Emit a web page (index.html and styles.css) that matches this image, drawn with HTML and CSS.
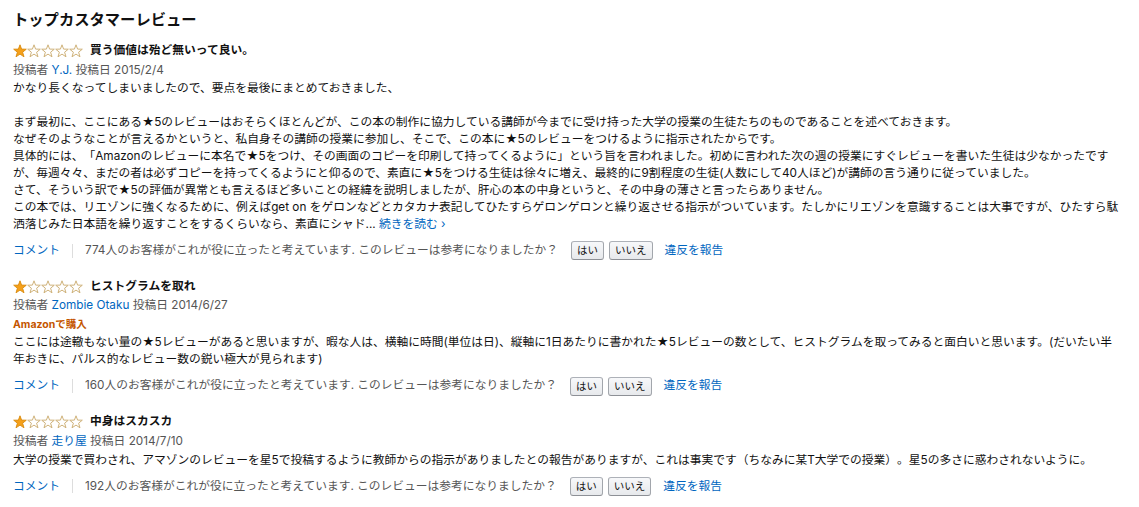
FILE: index.html
```html
<!DOCTYPE html>
<html lang="ja">
<head>
    <meta charset="UTF-8">
    <meta name="viewport" content="width=device-width, initial-scale=1.0">
    <title>トップカスタマーレビュー</title>
    <link rel="stylesheet" href="styles.css">
</head>
<body>
    <svg class="defs" width="0" height="0" aria-hidden="true">
        <defs>
            <polygon id="star" points="7,0.8 8.6,5.1 13.3,5.2 9.6,8.2 11,12.8 7,10.1 3,12.8 4.4,8.2 0.7,5.2 5.4,5.1"/>
        </defs>
    </svg>

    <div class="container">
        <h3>トップカスタマーレビュー</h3>

        <div class="review">
            <div class="review-title">
                <svg class="stars" width="70" height="14" viewBox="0 0 70 14">
                    <use href="#star" class="on"/>
                    <use href="#star" x="14" class="off"/>
                    <use href="#star" x="28" class="off"/>
                    <use href="#star" x="42" class="off"/>
                    <use href="#star" x="56" class="off"/>
                </svg>
                <span>買う価値は殆ど無いって良い。</span>
            </div>
            <div class="byline">投稿者 <a href="#">Y.J.</a> 投稿日 2015/2/4</div>
            <p class="review-text">かなり長くなってしまいましたので、要点を最後にまとめておきました、<br><br>まず最初に、ここにある★5のレビューはおそらくほとんどが、この本の制作に協力している講師が今までに受け持った大学の授業の生徒たちのものであることを述べておきます。<br>なぜそのようなことが言えるかというと、私自身その講師の授業に参加し、そこで、この本に★5のレビューをつけるように指示されたからです。<br>具体的には、「Amazonのレビューに本名で★5をつけ、その画面のコピーを印刷して持ってくるように」という旨を言われました。初めに言われた次の週の授業にすぐレビューを書いた生徒は少なかったですが、毎週々々、まだの者は必ずコピーを持ってくるようにと仰るので、素直に★5をつける生徒は徐々に増え、最終的に9割程度の生徒(人数にして40人ほど)が講師の言う通りに従っていました。<br>さて、そういう訳で★5の評価が異常とも言えるほど多いことの経緯を説明しましたが、肝心の本の中身というと、その中身の薄さと言ったらありません。<br>この本では、リエゾンに強くなるために、例えばget on をゲロンなどとカタカナ表記してひたすらゲロンゲロンと繰り返させる指示がついています。たしかにリエゾンを意識することは大事ですが、ひたすら駄洒落じみた日本語を繰り返すことをするくらいなら、素直にシャド... <a href="#" class="more">続きを読む ›</a></p>
            <div class="review-footer">
                <a href="#">コメント</a>
                <span class="divider"></span>
                <span>774人のお客様がこれが役に立ったと考えています. このレビューは参考になりましたか？</span>
                <button class="vote first">はい</button>
                <button class="vote">いいえ</button>
                <a href="#" class="report">違反を報告</a>
            </div>
        </div>

        <div class="review">
            <div class="review-title">
                <svg class="stars" width="70" height="14" viewBox="0 0 70 14">
                    <use href="#star" class="on"/>
                    <use href="#star" x="14" class="off"/>
                    <use href="#star" x="28" class="off"/>
                    <use href="#star" x="42" class="off"/>
                    <use href="#star" x="56" class="off"/>
                </svg>
                <span>ヒストグラムを取れ</span>
            </div>
            <div class="byline">投稿者 <a href="#">Zombie Otaku</a> 投稿日 2014/6/27</div>
            <div class="badge">Amazonで購入</div>
            <p class="review-text">ここには途轍もない量の★5レビューがあると思いますが、暇な人は、横軸に時間(単位は日)、縦軸に1日あたりに書かれた★5レビューの数として、ヒストグラムを取ってみると面白いと思います。(だいたい半<span class="nowrap">年おき</span>に、パルス的なレビュー数の鋭い極大が見られます)</p>
            <div class="review-footer">
                <a href="#">コメント</a>
                <span class="divider"></span>
                <span>160人のお客様がこれが役に立ったと考えています. このレビューは参考になりましたか？</span>
                <button class="vote first">はい</button>
                <button class="vote">いいえ</button>
                <a href="#" class="report">違反を報告</a>
            </div>
        </div>

        <div class="review">
            <div class="review-title">
                <svg class="stars" width="70" height="14" viewBox="0 0 70 14">
                    <use href="#star" class="on"/>
                    <use href="#star" x="14" class="off"/>
                    <use href="#star" x="28" class="off"/>
                    <use href="#star" x="42" class="off"/>
                    <use href="#star" x="56" class="off"/>
                </svg>
                <span>中身はスカスカ</span>
            </div>
            <div class="byline">投稿者 <a href="#">走り屋</a> 投稿日 2014/7/10</div>
            <p class="review-text spaced">大学の授業で買わされ、アマゾンのレビューを星5で投稿するように教師からの指示がありましたとの報告がありますが、これは事実です（ちなみに某T大学での授業）。星5の多さに惑わされないように。</p>
            <div class="review-footer">
                <a href="#">コメント</a>
                <span class="divider"></span>
                <span>192人のお客様がこれが役に立ったと考えています. このレビューは参考になりましたか？</span>
                <button class="vote first">はい</button>
                <button class="vote">いいえ</button>
                <a href="#" class="report">違反を報告</a>
            </div>
        </div>
    </div>
</body>
</html>
```

FILE: styles.css
```css
body {
    margin: 0;
    background-color: #ffffff;
    color: #111111;
    font-family: Inter, "Noto Sans CJK JP", sans-serif;
    font-size: 11.75px;
    line-height: 17.1px;
    text-spacing-trim: space-all;
}

a {
    color: #0066c0;
    text-decoration: none;
}

.defs {
    position: absolute;
    width: 0;
    height: 0;
}

.container {
    padding: 10px 17px 0 13px;
}

h3 {
    margin: 0 0 11.5px;
    font-size: 15.3px;
    line-height: 20px;
    font-weight: bold;
}

.review {
    margin-bottom: 16.5px;
}

.review-title {
    display: flex;
    align-items: center;
    height: 19px;
    font-weight: bold;
}

.stars {
    display: block;
    margin-right: 7px;
}

.stars .on {
    fill: #f5a01a;
    stroke: #d98a0c;
    stroke-width: 0.9;
}

.stars .off {
    fill: #ffffff;
    stroke: #cfb27a;
    stroke-width: 1;
}

.byline {
    line-height: 19px;
    color: #555555;
}

.badge {
    line-height: 19px;
    font-size: 10.5px;
    font-weight: bold;
    color: #c45500;
}

.review-text {
    margin: 0;
}

.review-text.spaced {
    margin-top: 1px;
}

.nowrap {
    white-space: nowrap;
}

.review-footer {
    display: flex;
    align-items: center;
    height: 20px;
    margin-top: 7.5px;
    color: #555555;
}

.divider {
    width: 1px;
    height: 14px;
    margin: 0 12px;
    background-color: #dddddd;
}

.vote {
    height: 19px;
    padding: 0 5px;
    margin-left: 5px;
    border: 1px solid #adb1b8;
    border-color: #adb1b8 #a2a6ac #8d9096;
    border-radius: 3px;
    background: linear-gradient(#f7f8fa, #e7e9ec);
    color: #111111;
    font-family: inherit;
    font-size: 10.5px;
    line-height: 17px;
}

.vote.first {
    margin-left: 13px;
}

.report {
    margin-left: 12px;
}
```
